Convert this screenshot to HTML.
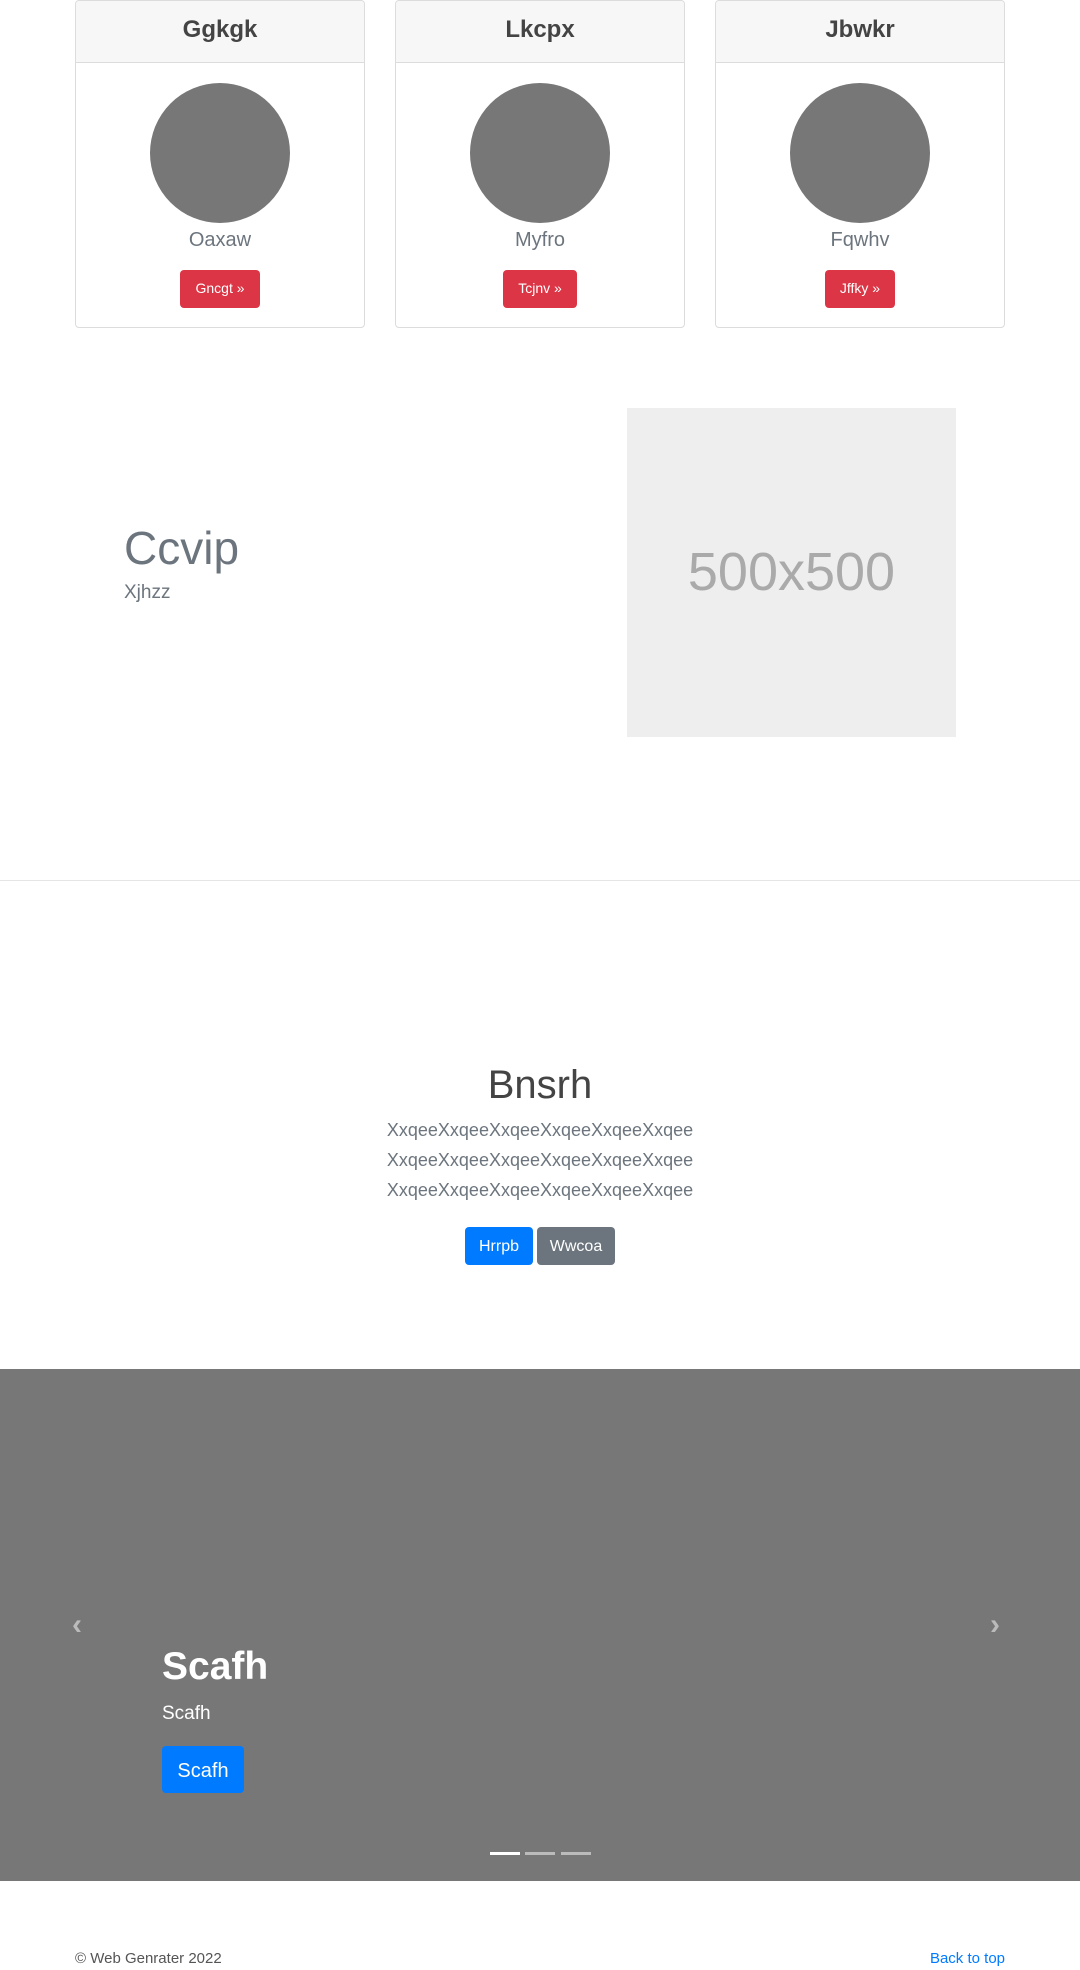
<!DOCTYPE html>
<html><head><meta charset="utf-8"><style>
*{box-sizing:border-box;margin:0;padding:0}
body{width:1080px;height:1970px;position:relative;background:#fff;font-family:"Liberation Sans",sans-serif;color:#212529;overflow:hidden}
.a{position:absolute}
.card{position:absolute;top:0;width:290px;height:328px;border:1px solid #dcdcdc;border-radius:4px;overflow:hidden}
.card .h{height:62px;background:#f7f7f7;border-bottom:1px solid #dcdcdc;text-align:center;font-size:24px;font-weight:bold;color:#444;line-height:58px}
.card .c{width:140px;height:140px;border-radius:50%;background:#777;margin:20px auto 0}
.card .n{text-align:center;font-size:20px;color:#6c757d;font-weight:300;margin-top:4px;line-height:26px}
.card .b{display:block;margin:17px auto 0;background:#dc3545;color:#fff;font-size:14px;border-radius:4px;height:38px;line-height:37px;text-align:center}
.btn{position:absolute;color:#fff;border-radius:4px;text-align:center;font-size:16px}
.ind{position:absolute;top:1852px;width:30px;height:3px;background:rgba(255,255,255,.5)}
</style></head><body>
<div class="card" style="left:75px"><div class="h">Ggkgk</div><div class="c"></div><div class="n">Oaxaw</div><span class="b" style="width:80px">Gncgt »</span></div>
<div class="card" style="left:395px"><div class="h">Lkcpx</div><div class="c"></div><div class="n">Myfro</div><span class="b" style="width:74px">Tcjnv »</span></div>
<div class="card" style="left:715px"><div class="h">Jbwkr</div><div class="c"></div><div class="n">Fqwhv</div><span class="b" style="width:70px">Jffky »</span></div>

<div class="a" style="left:124px;top:520px;font-size:46px;color:#6c757d;line-height:56px">Ccvip</div>
<div class="a" style="left:124px;top:582px;font-size:19px;color:#6c757d;font-weight:300">Xjhzz</div>
<div class="a" style="left:627px;top:408px;width:329px;height:329px;background:#eee;color:#aaa;font-size:54px;text-align:center;line-height:329px">500x500</div>

<div class="a" style="left:0;top:880px;width:1080px;height:1px;background:#e5e5e5"></div>

<div class="a" style="left:0;top:1060px;width:1080px;text-align:center;font-size:40px;color:#444;font-weight:300;line-height:50px">Bnsrh</div>
<div class="a" style="left:0;top:1115px;width:1080px;text-align:center;font-size:18px;color:#6c757d;line-height:30px">XxqeeXxqeeXxqeeXxqeeXxqeeXxqee<br>XxqeeXxqeeXxqeeXxqeeXxqeeXxqee<br>XxqeeXxqeeXxqeeXxqeeXxqeeXxqee</div>
<div class="btn" style="left:465px;top:1227px;width:68px;height:38px;line-height:40px;background:#007bff">Hrrpb</div>
<div class="btn" style="left:537px;top:1227px;width:78px;height:38px;line-height:40px;background:#6c757d">Wwcoa</div>

<div class="a" style="left:0;top:1369px;width:1080px;height:512px;background:#777"></div>
<div class="a" style="left:72px;top:1608px;font-size:30px;color:#bbb;font-weight:bold">&#8249;</div>
<div class="a" style="left:990px;top:1608px;font-size:30px;color:#bbb;font-weight:bold">&#8250;</div>
<div class="a" style="left:162px;top:1642px;font-size:39px;color:#fff;font-weight:bold;line-height:50px">Scafh</div>
<div class="a" style="left:162px;top:1702px;font-size:19px;color:#fff;line-height:24px">Scafh</div>
<div class="btn" style="left:162px;top:1746px;width:82px;height:47px;line-height:50px;background:#007bff;font-size:20px">Scafh</div>
<div class="ind" style="left:490px;background:#fff"></div>
<div class="ind" style="left:525px"></div>
<div class="ind" style="left:561px"></div>

<div class="a" style="left:75px;top:1950px;font-size:15px;color:#555">© Web Genrater 2022</div>
<div class="a" style="right:75px;top:1950px;font-size:15px;color:#007bff">Back to top</div>
</body></html>
